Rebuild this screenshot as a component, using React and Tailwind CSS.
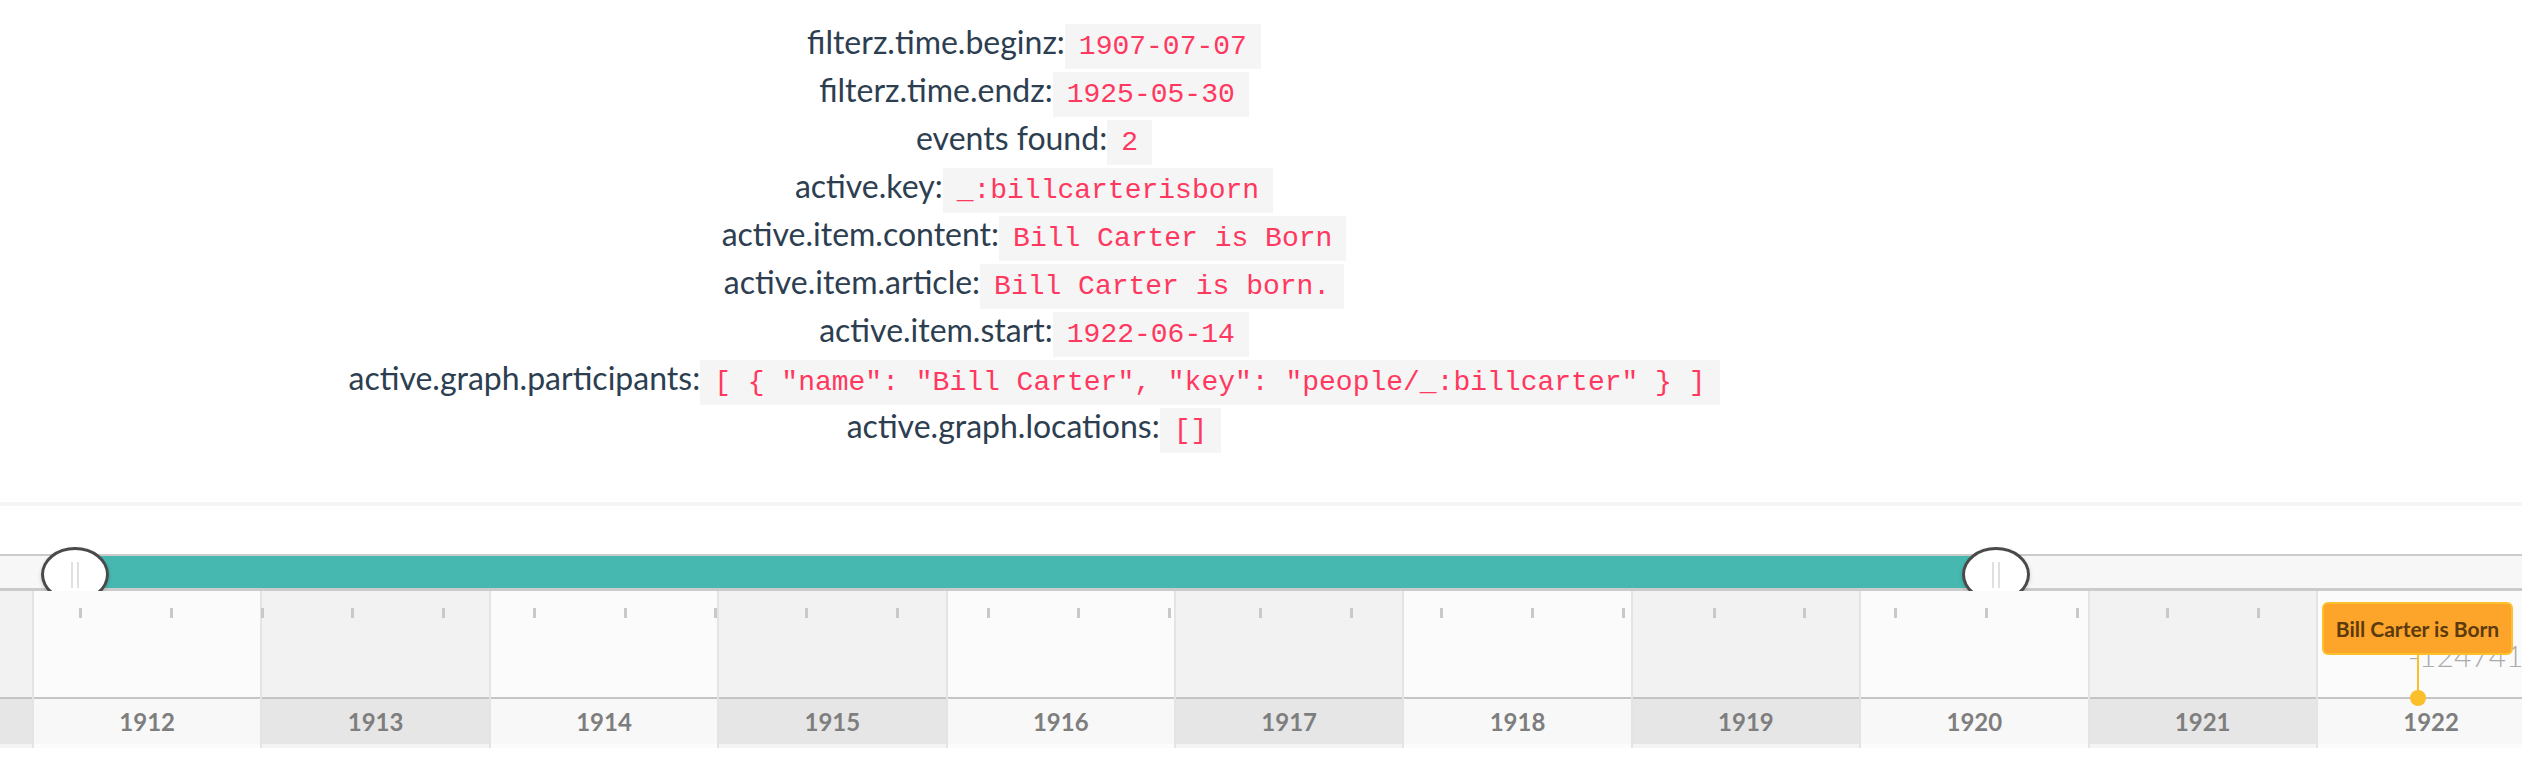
const rows = [
  ["filterz.time.beginz:", "1907-07-07"],
  ["filterz.time.endz:", "1925-05-30"],
  ["events found:", "2"],
  ["active.key:", "_:billcarterisborn"],
  ["active.item.content:", "Bill Carter is Born"],
  ["active.item.article:", "Bill Carter is born."],
  ["active.item.start:", "1922-06-14"],
  ["active.graph.participants:", '[ { "name": "Bill Carter", "key": "people/_:billcarter" } ]'],
  ["active.graph.locations:", "[]"],
];

const years = [1912, 1913, 1914, 1915, 1916, 1917, 1918, 1919, 1920, 1921, 1922];
const ticks = Array.from({ length: 27 });

function YearColumn({ year, first }) {
  const odd = year % 2 === 1;
  return (
    <div
      className={`flex flex-col shrink-0 ${first ? "w-[32px]" : "w-[228.4px] border-l-2 border-[#e4e4e4]"}`}
    >
      <div className={`h-[106px] ${odd ? "bg-[#f2f2f2]" : "bg-[#fbfbfb]"}`} />
      <div className="h-[2px] bg-[#c4c4c4]" />
      <div
        className={`h-[45px] flex items-center justify-center text-[24px] font-bold text-[#7e7e7e] ${
          odd ? "bg-[#e6e6e6]" : "bg-[#f8f8f8]"
        }`}
      >
        {first ? "" : year}
      </div>
      <div className={`h-[4px] ${odd ? "bg-[#f4f4f4]" : "bg-[#fcfcfc]"}`} />
    </div>
  );
}

function Handle({ left }) {
  return (
    <div
      className={`absolute top-[-9px] ${left} w-[68px] h-[55px] rounded-[50%] border-[3px] border-[#4a4a4a] bg-white shadow-[0_2px_4px_rgba(0,0,0,0.15)] flex items-center justify-center gap-[4px]`}
    >
      <div className="w-[2px] h-[26px] bg-[#e0e0e0]" />
      <div className="w-[2px] h-[26px] bg-[#e0e0e0]" />
    </div>
  );
}

export default function App() {
  return (
    <div className="w-[2522px] h-[770px] overflow-hidden bg-white font-['Lato',sans-serif]">
      {/* debug values */}
      <div className="w-[2068px] pt-[18px] text-center text-[32px] leading-[48px] text-[#2c3e50]">
        {rows.map(([label, value]) => (
          <div key={label} className="h-[48px] whitespace-nowrap">
            {label}
            <code className="bg-[#f5f5f5] text-[#ff3860] text-[28px] leading-none px-[14px] py-[7px] font-['Liberation_Mono',monospace]">
              {value}
            </code>
          </div>
        ))}
      </div>

      <div className="mt-[52px] h-[4px] bg-[#f5f5f5]" />

      {/* range slider */}
      <div className="mt-[48px] relative h-[37px] border-t-2 border-b-[3px] border-[#cbcbcb] bg-[#f7f7f7] flex">
        <div className="w-[75px] shrink-0" />
        <div className="w-[1921px] shrink-0 bg-[#46b8b0]" />
        <Handle left="left-[41px]" />
        <Handle left="left-[1962px]" />
      </div>

      {/* timeline */}
      <div className="relative h-[157px] flex overflow-hidden">
        <YearColumn year={1911} first />
        {years.map((y) => (
          <YearColumn key={y} year={y} />
        ))}

        <div className="absolute top-[17px] left-[79px] flex gap-[87.75px]">
          {ticks.map((_, i) => (
            <div key={i} className="w-[3px] h-[10px] bg-[#c9c9c9]" />
          ))}
        </div>

        <div className="absolute top-[49px] left-[2408px] text-[30px] leading-none font-light text-[#ababab] whitespace-nowrap">
          -12474165
        </div>
        <div className="absolute top-[64px] left-[2417px] w-[2px] h-[43px] bg-[#fbbf2c]" />
        <div className="absolute top-[99px] left-[2410px] w-[16px] h-[16px] rounded-full bg-[#fbbf2c]" />
        <div className="absolute top-[11px] left-[2322px] w-[191px] h-[53px] rounded-[6px] border-2 border-[#fdc12d] bg-[#fca52a] flex items-center justify-center text-[21px] font-bold text-[#5c3a0e] whitespace-nowrap">
          Bill Carter is Born
        </div>
      </div>
    </div>
  );
}
